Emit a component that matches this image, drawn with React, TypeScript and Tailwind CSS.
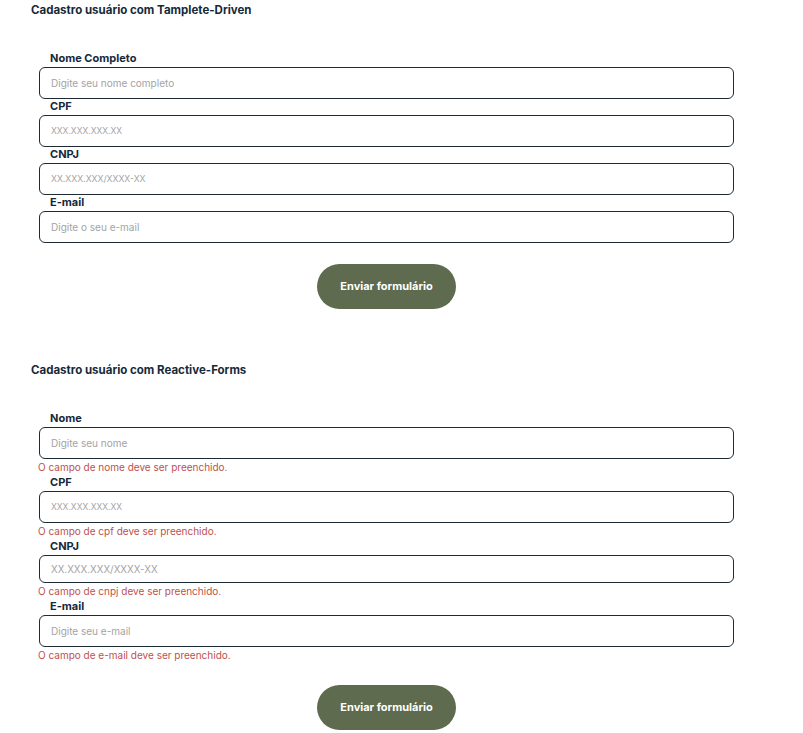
import React from "react";

const font = { fontFamily: "Inter, 'Noto Sans', sans-serif" };

function Field({
  label,
  placeholder,
  error,
  size,
  big,
}: {
  label: string;
  placeholder: string;
  error?: string;
  size: string;
  big?: boolean;
}) {
  return (
    <div className="flex flex-col">
      <label className="ml-[19px] mb-[2px] text-[11px] leading-[14px] font-bold text-[#16293a]">
        {label}
      </label>
      <input
        placeholder={placeholder}
        className={
          "ml-[8px] w-[695px] rounded-[6px] border border-[#1c2b35] bg-white pl-[11px] outline-none text-[#16293a] placeholder:text-[#a3a3a3] " +
          (big ? "h-[28px] " : "h-[32px] ") +
          size
        }
        style={font}
      />
      {error && (
        <div className="ml-[7px] h-[16px] text-[10px] leading-[16px] text-[#c0504d]">{error}</div>
      )}
    </div>
  );
}

function Button() {
  return (
    <div className="w-[695px] ml-[8px] flex justify-center">
      <button className="w-[139px] h-[45px] rounded-full bg-[#5e6b4e] text-white text-[11px] font-bold">
        Enviar formulário
      </button>
    </div>
  );
}

export default function App() {
  return (
    <div className="bg-white min-h-[733px] w-[803px] pl-[31px] pt-[3px]" style={font}>
      <h1 className="text-[11.5px] leading-[14px] font-bold text-[#16293a]">
        Cadastro usuário com Tamplete-Driven
      </h1>
      <div className="mt-[34px] flex flex-col">
        <Field label="Nome Completo" placeholder="Digite seu nome completo" size="text-[10px]" />
        <Field label="CPF" placeholder="XXX.XXX.XXX.XX" size="text-[8.5px]" />
        <Field label="CNPJ" placeholder="XX.XXX.XXX/XXXX-XX" size="text-[8.7px]" />
        <Field label="E-mail" placeholder="Digite o seu e-mail" size="text-[10px]" />
      </div>
      <div className="mt-[21px]">
        <Button />
      </div>
      <h1 className="mt-[54px] text-[11.5px] leading-[14px] font-bold text-[#16293a]">
        Cadastro usuário com Reactive-Forms
      </h1>
      <div className="mt-[34px] flex flex-col">
        <Field label="Nome" placeholder="Digite seu nome" size="text-[10px]" error="O campo de nome deve ser preenchido." />
        <Field label="CPF" placeholder="XXX.XXX.XXX.XX" size="text-[8.5px]" error="O campo de cpf deve ser preenchido." />
        <Field label="CNPJ" placeholder="XX.XXX.XXX/XXXX-XX" size="text-[9.8px]" error="O campo de cnpj deve ser preenchido." big />
        <Field label="E-mail" placeholder="Digite seu e-mail" size="text-[10px]" error="O campo de e-mail deve ser preenchido." />
      </div>
      <div className="mt-[22px]">
        <Button />
      </div>
    </div>
  );
}
